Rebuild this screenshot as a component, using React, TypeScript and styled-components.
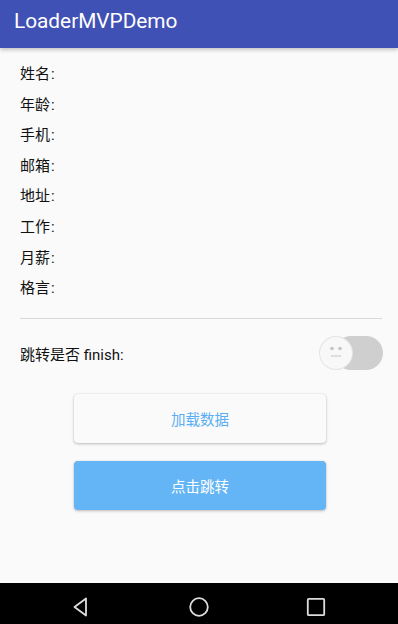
import React from "react";
import styled, { createGlobalStyle } from "styled-components";

const Global = createGlobalStyle`
  html, body { margin: 0; padding: 0; background: #fafafa; }
  body { font-family: Roboto, "Noto Sans CJK SC", sans-serif; }
`;

const Screen = styled.div`
  width: 398px;
  height: 624px;
  display: flex;
  flex-direction: column;
  background: #fafafa;
  overflow: hidden;
`;

const AppBar = styled.header`
  height: 48px;
  flex: none;
  background: #3f51b5;
  color: #fff;
  display: flex;
  align-items: center;
  padding-left: 14px;
  padding-bottom: 6px;
  box-sizing: border-box;
  font-size: 20.8px;
  font-family: Roboto, sans-serif;
  box-shadow: 0 2px 4px rgba(0, 0, 0, 0.22);
  position: relative;
  z-index: 1;
`;

const Content = styled.main`
  flex: 1;
  display: flex;
  flex-direction: column;
  padding: 17px 16px 0 20px;
`;

const Fields = styled.div`
  display: flex;
  flex-direction: column;
  gap: 12.6px;
`;

const Field = styled.div`
  font-size: 15px;
  line-height: 18px;
  height: 18px;
  color: #111;
  font-family: Roboto, "Noto Sans CJK SC", sans-serif;
  display: flex;
  align-items: center;
`;

const Colon = styled.span`
  margin-left: 1px;
`;

const Divider = styled.div`
  height: 1px;
  background: #d9d9d9;
  margin-top: 21px;
`;

const SwitchRow = styled.div`
  display: flex;
  align-items: center;
  justify-content: space-between;
  margin-top: 17px;
  height: 34px;
`;

const SwitchLabel = styled.span`
  font-size: 15px;
  color: #111;
  font-family: Roboto, "Noto Sans CJK SC", sans-serif;
`;

const Track = styled.div`
  position: relative;
  width: 63px;
  height: 34px;
  margin-right: -1px;
`;

const TrackBar = styled.div`
  position: absolute;
  left: 14px;
  right: 0;
  top: 0;
  bottom: 0;
  border-radius: 17px;
  background: #cfcfcf;
`;

const Thumb = styled.div`
  position: absolute;
  left: 0;
  top: 1px;
  width: 32px;
  height: 32px;
  border-radius: 50%;
  background: #f8f8f8;
  box-shadow: 0 0 0 1px #e4e4e4;
`;

const Buttons = styled.div`
  display: flex;
  flex-direction: column;
  align-items: center;
  gap: 18px;
  margin-top: 24px;
  margin-left: -20px;
  margin-right: -16px;
`;

const Button = styled.button<{ $primary?: boolean }>`
  width: 252px;
  height: 49px;
  border: none;
  border-radius: 4px;
  font-size: 14.5px;
  font-family: Roboto, "Noto Sans CJK SC", sans-serif;
  background: ${(p) => (p.$primary ? "#64b5f6" : "#fafafa")};
  color: ${(p) => (p.$primary ? "#ffffff" : "#5aaef5")};
  box-shadow: 0 1px 3px rgba(0, 0, 0, 0.25), 0 0 1px rgba(0, 0, 0, 0.12);
  margin-left: 2px;
`;

const NavBar = styled.nav`
  height: 41px;
  flex: none;
  background: #000;
  display: flex;
  align-items: center;
  justify-content: center;
  gap: 93px;
`;

const NavIcon = styled.svg`
  width: 24px;
  height: 24px;
  margin-top: 6px;
`;

const fields = ["姓名", "年龄", "手机", "邮箱", "地址", "工作", "月薪", "格言"];

export default function App() {
  return (
    <Screen>
      <Global />
      <AppBar>LoaderMVPDemo</AppBar>
      <Content>
        <Fields>
          {fields.map((f) => (
            <Field key={f}>
              {f}
              <Colon>:</Colon>
            </Field>
          ))}
        </Fields>
        <Divider />
        <SwitchRow>
          <SwitchLabel>跳转是否 finish:</SwitchLabel>
          <Track>
            <TrackBar />
            <Thumb>
              <svg width="32" height="32" viewBox="0 0 32 32">
                <circle cx="12" cy="11.5" r="1.8" fill="#c4c4c4" />
                <circle cx="20" cy="11.5" r="1.8" fill="#c4c4c4" />
                <line x1="11" y1="19" x2="21" y2="19" stroke="#c4c4c4" strokeWidth="1" />
              </svg>
            </Thumb>
          </Track>
        </SwitchRow>
        <Buttons>
          <Button>加载数据</Button>
          <Button $primary>点击跳转</Button>
        </Buttons>
      </Content>
      <NavBar>
        <NavIcon viewBox="0 0 24 24">
          <path d="M16 3.5 L4.5 12 L16 20.5 Z" fill="none" stroke="#ddd" strokeWidth="1.8" strokeLinejoin="round" />
        </NavIcon>
        <NavIcon viewBox="0 0 24 24">
          <circle cx="12" cy="12" r="8.8" fill="none" stroke="#ddd" strokeWidth="1.8" />
        </NavIcon>
        <NavIcon viewBox="0 0 24 24">
          <rect x="3.8" y="3.8" width="16.4" height="16.4" rx="1" fill="none" stroke="#ddd" strokeWidth="1.8" />
        </NavIcon>
      </NavBar>
    </Screen>
  );
}
